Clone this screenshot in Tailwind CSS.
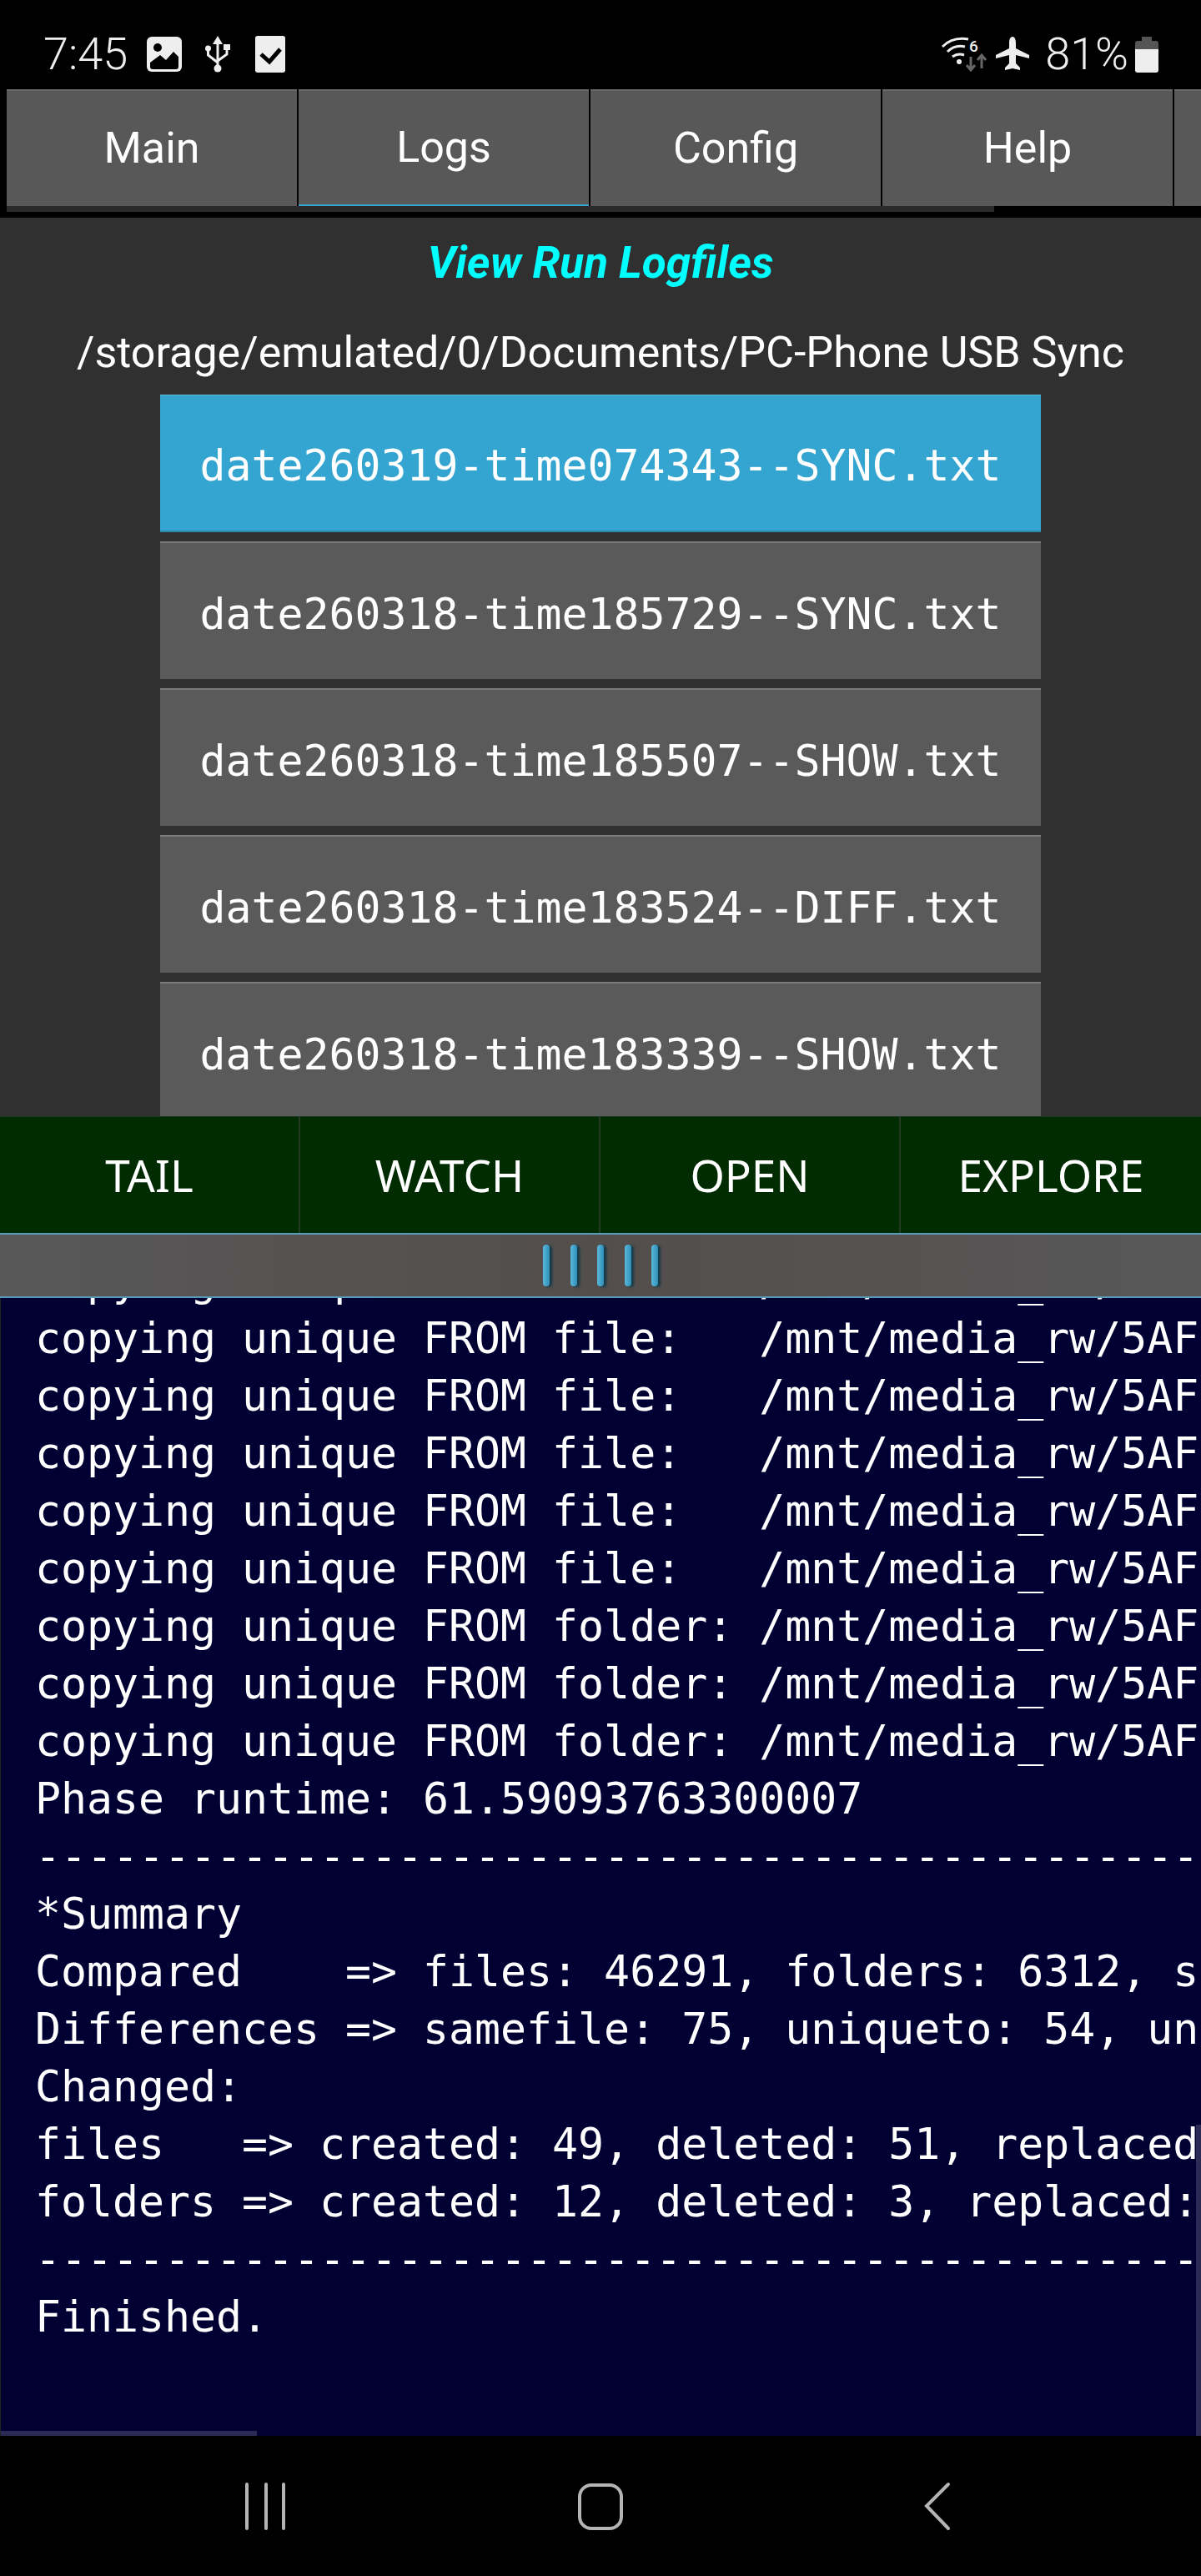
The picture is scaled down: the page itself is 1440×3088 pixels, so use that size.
<!DOCTYPE html>
<html lang="en">
<head>
    <meta charset="UTF-8">
    <meta name="viewport" content="width=device-width, initial-scale=1.0">
    <title>PC-Phone USB Sync - Logs</title>
    <script src="https://cdn.jsdelivr.net/npm/@tailwindcss/browser@4"></script>
</head>
<body class="bg-black">
<div class="w-[1440px] h-[3088px] flex flex-col overflow-hidden bg-black font-['Roboto',sans-serif]">

    <!-- Status bar -->
    <div class="h-[107px] shrink-0 flex items-center justify-between pl-[52px] pr-[51px] pt-[23px] text-[#eeeeee]">
        <div class="flex items-center">
            <span class="text-[54px] font-light leading-none">7:45</span>
            <svg class="ml-[23px]" width="42" height="42" viewBox="0 0 42 42"><rect width="42" height="42" rx="6" fill="#eee"/><circle cx="13" cy="13" r="5" fill="#000"/><path d="M4 31l12-9 7 6 9-10 6 6v12a3 3 0 0 1-3 3H7a3 3 0 0 1-3-3z" fill="#000"/></svg>
            <svg class="ml-[28px]" width="30" height="44" viewBox="0 0 30 44" fill="none" stroke="#eee" stroke-width="3"><path d="M15 0l6 10H9z" fill="#eee" stroke="none"/><path d="M15 8v30M3.5 17v6l11.5 9M26 14v8l-11 8"/><circle cx="15" cy="39" r="4.5" fill="#eee" stroke="none"/><circle cx="3.5" cy="15" r="3.5" fill="#eee" stroke="none"/><rect x="22" y="10" width="8" height="7" fill="#eee" stroke="none"/></svg>
            <svg class="ml-[30px]" width="36" height="44" viewBox="0 0 36 44"><rect width="36" height="44" rx="3" fill="#eee"/><path d="M7 22l10 9 13-15" fill="none" stroke="#000" stroke-width="5"/></svg>
        </div>
        <div class="flex items-center">
            <svg width="55" height="42" viewBox="0 0 55 42" fill="none" stroke="#eee" stroke-width="3"><path d="M1 12C9 4 20 1 32 3M7 18c6-6 13-8 21-6M13 24c4-3 9-4 14-2"/><circle cx="21" cy="30" r="3" fill="#eee" stroke="none"/><text x="33" y="18" font-size="19" font-family="Roboto" font-weight="500" fill="#eee" stroke="none">6</text><path d="M35 24v15m-5-5 5 6 5-6M48 38V23m-5 5 5-6 5 6" stroke="#666"/></svg>
            <svg class="ml-[9px]" width="42" height="42" viewBox="0 0 42 42"><path d="M21 0c3 0 4 4 4 8v6l16 8v4l-16-4v10l5 5v3l-9-2-9 2v-3l5-5V22L1 26v-4l16-8V8c0-4 1-8 4-8z" fill="#eee"/></svg>
            <span class="ml-[18px] text-[54px] font-light leading-none">81%</span>
            <svg class="ml-[8px]" width="28" height="43" viewBox="0 0 28 43"><path d="M8 0h12v5h5a3 3 0 0 1 3 3v8H0V8a3 3 0 0 1 3-3h5z" fill="#555"/><path d="M0 15h28v25a3 3 0 0 1-3 3H3a3 3 0 0 1-3-3z" fill="#eee"/></svg>
        </div>
    </div>

    <!-- Tabs -->
    <div class="h-[154px] shrink-0 overflow-hidden">
        <div class="flex gap-[2px] pl-[8px] h-[140px] text-white text-[52px]">
            <div class="w-[348px] shrink-0 bg-[#585858] border-t-2 border-[#6a6a6a] flex items-center justify-center">Main</div>
            <div class="w-[348px] shrink-0 bg-[#585858] border-t-2 border-t-[#6a6a6a] border-b-2 border-b-[#33a5d0] flex items-center justify-center">Logs</div>
            <div class="w-[348px] shrink-0 bg-[#585858] border-t-2 border-[#6a6a6a] flex items-center justify-center">Config</div>
            <div class="w-[348px] shrink-0 bg-[#585858] border-t-2 border-[#6a6a6a] flex items-center justify-center">Help</div>
            <div class="w-[348px] shrink-0 bg-[#585858] border-t-2 border-[#6a6a6a]"></div>
        </div>
        <div class="ml-[8px] w-[1184px] h-[7px] bg-[#2a2a2a]"></div>
    </div>

    <!-- Logs panel -->
    <div class="h-[1077px] shrink-0 bg-[#303030] overflow-hidden">
        <h1 class="h-[133px] pt-[25px] text-center text-[53px] leading-[58px] font-bold italic text-[#00ffff]">View Run Logfiles</h1>
        <p class="h-[79px] text-center text-[52px] leading-[58px] text-white whitespace-nowrap">/storage/emulated/0/Documents/PC-Phone USB Sync</p>
        <div class="flex flex-col gap-[11px] w-[1056px] mx-auto font-['DejaVu_Sans_Mono',monospace] text-[51.5px] text-white">
            <div class="h-[165px] shrink-0 flex items-center justify-center pt-[8px] bg-[#33a5d0] border-t border-b-2 border-t-[#5cb8da] border-b-[#2a88a8]">date260319-time074343--SYNC.txt</div>
            <div class="h-[165px] shrink-0 flex items-center justify-center pt-[8px] bg-[#5a5a5a] border-t-2 border-[#7a7a7a]">date260318-time185729--SYNC.txt</div>
            <div class="h-[165px] shrink-0 flex items-center justify-center pt-[8px] bg-[#5a5a5a] border-t-2 border-[#7a7a7a]">date260318-time185507--SHOW.txt</div>
            <div class="h-[165px] shrink-0 flex items-center justify-center pt-[8px] bg-[#5a5a5a] border-t-2 border-[#7a7a7a]">date260318-time183524--DIFF.txt</div>
            <div class="h-[165px] shrink-0 flex items-center justify-center pt-[8px] bg-[#5a5a5a] border-t-2 border-[#7a7a7a]">date260318-time183339--SHOW.txt</div>
        </div>
    </div>

    <!-- Action buttons -->
    <div class="h-[140px] shrink-0 grid grid-cols-4 bg-[#012c01] border-t border-[#1f3a1f] font-['Noto_Sans',sans-serif] text-white text-[53px]">
        <div class="flex items-center justify-center border-r-2 border-[#243a24]">TAIL</div>
        <div class="flex items-center justify-center border-r-2 border-[#243a24]">WATCH</div>
        <div class="flex items-center justify-center border-r-2 border-[#243a24]">OPEN</div>
        <div class="flex items-center justify-center">EXPLORE</div>
    </div>

    <!-- Splitter -->
    <div class="h-[78px] shrink-0 bg-linear-to-r from-[#585858] via-[#534e4c] to-[#585858] border-y-2 border-[#5a9ab8] flex items-center justify-center gap-[24.5px]">
        <div class="w-[8px] h-[50px] rounded-sm bg-linear-to-r from-[#5ab8dc] to-[#2f8fb5] shadow-[3px_1px_3px_#123a48]"></div>
        <div class="w-[8px] h-[50px] rounded-sm bg-linear-to-r from-[#5ab8dc] to-[#2f8fb5] shadow-[3px_1px_3px_#123a48]"></div>
        <div class="w-[8px] h-[50px] rounded-sm bg-linear-to-r from-[#5ab8dc] to-[#2f8fb5] shadow-[3px_1px_3px_#123a48]"></div>
        <div class="w-[8px] h-[50px] rounded-sm bg-linear-to-r from-[#5ab8dc] to-[#2f8fb5] shadow-[3px_1px_3px_#123a48]"></div>
        <div class="w-[8px] h-[50px] rounded-sm bg-linear-to-r from-[#5ab8dc] to-[#2f8fb5] shadow-[3px_1px_3px_#123a48]"></div>
    </div>

    <!-- Log output -->
    <div class="h-[1364px] shrink-0 bg-[#000033] border-l border-[#222222] relative overflow-hidden">
        <pre class="pl-[41px] -mt-[55px] font-['DejaVu_Sans_Mono',monospace] text-[51.5px] leading-[69px] text-white">copying unique FROM file:   /mnt/media_rw/5AFB-1A0C/Documents
copying unique FROM file:   /mnt/media_rw/5AFB-1A0C/Documents
copying unique FROM file:   /mnt/media_rw/5AFB-1A0C/Documents
copying unique FROM file:   /mnt/media_rw/5AFB-1A0C/Documents
copying unique FROM file:   /mnt/media_rw/5AFB-1A0C/Documents
copying unique FROM file:   /mnt/media_rw/5AFB-1A0C/Documents
copying unique FROM folder: /mnt/media_rw/5AFB-1A0C/Documents
copying unique FROM folder: /mnt/media_rw/5AFB-1A0C/Documents
copying unique FROM folder: /mnt/media_rw/5AFB-1A0C/Documents
Phase runtime: 61.59093763300007
------------------------------------------------------------
*Summary
Compared    => files: 46291, folders: 6312, skipped: 0
Differences => samefile: 75, uniqueto: 54, uniquefrom: 63
Changed:
files   => created: 49, deleted: 51, replaced: 75
folders => created: 12, deleted: 3, replaced: 0
------------------------------------------------------------
Finished.</pre>
        <div class="absolute left-0 bottom-0 w-[307px] h-[6px] bg-[#2a2a55]"></div>
        <div class="absolute right-0 bottom-0 w-[6px] h-[373px] bg-[#2a2a55]"></div>
    </div>

    <!-- Navigation bar -->
    <div class="flex-1">
        <svg width="1440" height="168" viewBox="0 0 1440 168" fill="none" stroke="#b4b4b4">
            <path d="M296 58v53M319 58v53M340 58v53" stroke-width="4" stroke-linecap="round"/>
            <rect x="695" y="59" width="50" height="52" rx="14" stroke-width="4"/>
            <path d="M1137 58l-26 26 26 27" stroke-width="4" stroke-linecap="round"/>
        </svg>
    </div>
</div>
</body>
</html>
